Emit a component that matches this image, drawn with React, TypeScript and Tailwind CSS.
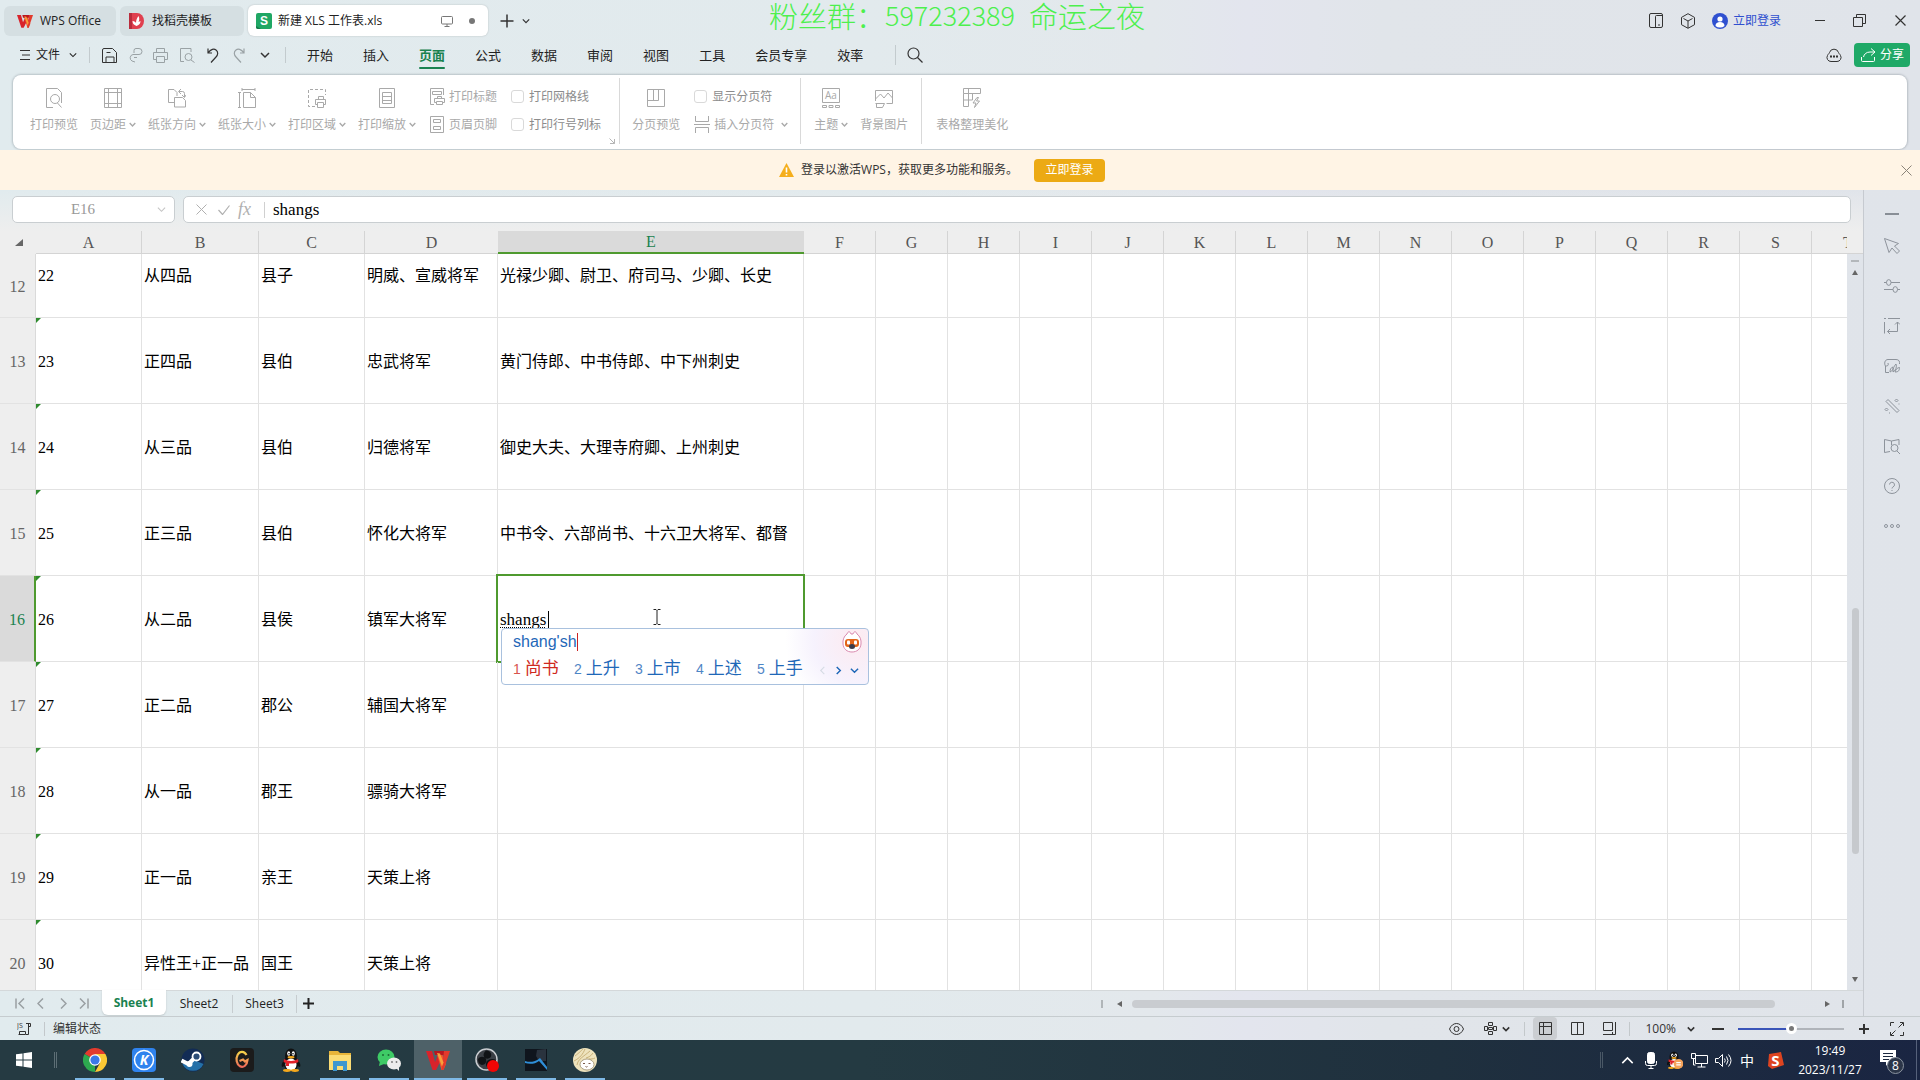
import React from "react";

type SvgProps = { w?: number; h?: number; className?: string; sw?: number; children: React.ReactNode };

function Svg({ w = 18, h = 20, className = "", sw = 1, children }: SvgProps) {
  return (
    <svg
      width={w}
      height={h}
      viewBox={`0 0 ${w} ${h}`}
      fill="none"
      stroke="currentColor"
      strokeWidth={sw}
      className={`shrink-0 ${className}`}
      aria-hidden="true"
    >
      {children}
    </svg>
  );
}

function Chevron({ w = 8, sw = 1.5, className = "" }: { w?: number; sw?: number; className?: string }) {
  return (
    <svg width={w} height={w} viewBox="0 0 10 10" fill="none" stroke="currentColor" strokeWidth={sw} className={`shrink-0 ${className}`} aria-hidden="true">
      <path d="M1 3l4 4 4-4" />
    </svg>
  );
}

function WpsLogo({ size = 16 }: { size?: number }) {
  return (
    <svg width={size} height={size} viewBox="0 0 24 24" className="shrink-0" aria-hidden="true">
      <path d="M0 3h6l3 11 3-7 2.500 6-4.500 9H6.500z" fill="#d8232b" />
      <path d="M10 3h5l5 13-2.500 6h-2z" fill="#f0522c" />
      <path d="M8 3h13l-1.500 4H9z" fill="#b9161f" />
      <path d="M18 3h6l-6.500 19h-2z" fill="#e23a2c" />
      <path d="M11 5l3 .5 3.500 9-1.500 4z" fill="#f8a03a" />
    </svg>
  );
}

/* ---------- title bar ---------- */

function TitleBar() {
  return (
    <header className="relative flex h-10 shrink-0 items-center pl-1 pr-[14px] pt-px text-[12px] text-[#222]">
      <button className="flex h-[30px] w-28 items-center gap-[7px] rounded-md bg-[#d5dfe2] pl-[13px]">
        <WpsLogo />
        <span>WPS Office</span>
      </button>
      <button className="ml-1 flex h-[30px] w-[124px] items-center gap-2 rounded-md bg-[#d5dfe2] pl-2">
        <svg width="16" height="16" viewBox="0 0 16 16" aria-hidden="true">
          <path d="M1 0h8a7 8 0 0 1 0 16H1z" fill="#e0404f" />
          <path d="M1 0h3v16H1z" fill="#b92c3c" />
          <path d="M8.500 13c-3-1-4-3-4-5 2 0 3 1 3.500 2 0-3 1-5 2.500-7 1 2 1 4 0 6l2-1c0 2-1 4-4 5z" fill="#fff" />
        </svg>
        <span>找稻壳模板</span>
      </button>
      <div className="ml-1 flex h-[31px] w-60 items-center rounded-md bg-white pl-2 pr-[13px] shadow-[0_0_2px_rgba(0,0,0,0.2)]">
        <svg width="16" height="16" viewBox="0 0 16 16" aria-hidden="true">
          <rect width="16" height="16" rx="2" fill="#1fa764" />
          <path d="M0 13l5 3H2a2 2 0 0 1-2-2z" fill="#147a48" />
          <text x="8" y="12" textAnchor="middle" fontSize="12" fontWeight="700" fill="#fff" fontFamily="Liberation Sans, sans-serif">S</text>
        </svg>
        <span className="ml-1.5 grow whitespace-nowrap">新建 XLS 工作表.xls</span>
        <Svg w={12} h={12} className="mr-4 text-[#777]">
          <path d="M1.500 1.500h9a1 1 0 0 1 1 1V8a1 1 0 0 1-1 1h-9a1 1 0 0 1-1-1V2.500a1 1 0 0 1 1-1zM6 9v2.500M3.500 11.500h5" />
        </Svg>
        <span className="size-1.5 rounded-full bg-[#777]" />
      </div>
      <button aria-label="新建标签" className="ml-3 text-[#333]">
        <Svg w={14} h={14} sw={1.500}><path d="M7 0.500v13M0.500 7h13" /></Svg>
      </button>
      <button aria-label="标签列表" className="ml-2 text-[#333]"><Chevron /></button>

      <div className="grow" />
      <div className="flex items-center text-[#333]">
        <button aria-label="布局">
          <Svg w={14} h={15}>
            <rect x="0.500" y="0.500" width="13" height="14" rx="1.500" />
            <path d="M6.500 14V3.500a1 1 0 0 1 1-1H13M9 12h2" />
          </Svg>
        </button>
        <button aria-label="应用" className="ml-[17px]">
          <Svg w={16} h={16}>
            <path d="M8 0.700l6.500 3.700v7.300L8 15.300l-6.500-3.600V4.400zM3.500 5.500L8 8l4.500-2.500M8 8v7" />
          </Svg>
        </button>
        <button className="ml-4 flex items-center gap-[5px] text-[#2f4fcf]">
          <svg width="16" height="16" viewBox="0 0 16 16" aria-hidden="true">
            <circle cx="8" cy="8" r="8" fill="#2f50d0" />
            <circle cx="8" cy="6" r="2.600" fill="#fff" />
            <path d="M3.500 13c0-3 2-4 4.500-4s4.500 1 4.500 4A7 7 0 0 1 8 14.500 7 7 0 0 1 3.500 13z" fill="#fff" />
          </svg>
          <span>立即登录</span>
        </button>
        <button aria-label="最小化" className="ml-[34px]"><Svg w={10} h={12}><path d="M0 5.500h10" /></Svg></button>
        <button aria-label="还原" className="ml-7">
          <Svg w={13} h={13}><path d="M0.500 3.500h9v9h-9zM3.500 3.500v-3h9v9h-3" /></Svg>
        </button>
        <button aria-label="关闭" className="ml-[29px]"><Svg w={11} h={11} sw={1.200}><path d="M0.500 0.500l10 10M10.500 0.500l-10 10" /></Svg></button>
      </div>
      <div className="pointer-events-none absolute inset-x-0 top-0 flex justify-center pr-1.5 font-['Noto_Sans_CJK_SC'] text-[29px] font-light leading-[30px] text-[#4df04d]">
        <p className="flex items-center whitespace-nowrap">
          粉丝群：<span className="text-[27px]">597232389</span>
          <span className="ml-3.5">命运之夜</span>
        </p>
      </div>
    </header>
  );
}

/* ---------- menu row ---------- */

const menus = ["开始", "插入", "页面", "公式", "数据", "审阅", "视图", "工具", "会员专享", "效率"];

function MenuBar() {
  return (
    <nav className="flex h-[35px] shrink-0 items-center pb-[5px] pl-5 pr-[10px] text-[12px] text-[#222]">
      <button className="flex items-center">
        <Svg w={10} h={12} className="text-[#333]"><path d="M0 1.500h10M2 6h8M0 10.500h10" /></Svg>
        <span className="ml-1.5">文件</span>
        <Chevron className="ml-[9px]" sw={1.300} />
      </button>
      <span className="ml-3 h-4 w-px bg-[#c3cbce]" />
      <div className="ml-3 flex items-center text-[#9aa2a5]">
        <button aria-label="保存" className="text-[#333]">
          <Svg w={15} h={15}><path d="M0.500 14.500V2a1.500 1.500 0 0 1 1.500-1.500h8.500l4 4V14.500H12M0.500 14.500H4M4 14.500V9h8v5.500zM4.500 4.500h4" /></Svg>
        </button>
        <button aria-label="输出" className="ml-3">
          <Svg w={14} h={15}><path d="M5 5V2.500A2 2 0 0 1 7 .5h3a3 3 0 0 1 0 6H4a3.500 3.500 0 0 0-1 6.500l3 1M5 9.500h3" /></Svg>
        </button>
        <button aria-label="打印" className="ml-2.5">
          <Svg w={15} h={15}><path d="M3.500 4V0.500h8V4M3.500 11.500h-3v-7h14v7h-3M3.500 8.500h8v6h-8z" /></Svg>
        </button>
        <button aria-label="打印预览" className="ml-3">
          <Svg w={15} h={15}><path d="M4 13.500H0.500v-13H11V4M11 12l3.500 2.500" /><circle cx="8.500" cy="9" r="3.500" /></Svg>
        </button>
        <button aria-label="撤销" className="ml-3 text-[#333]">
          <Svg w={12} h={15} sw={1.200}><path d="M1 0.500v4.500h4M1 5C4 1 7 .5 9 2c2.500 2 2 5 0 7l-5 5.500" /></Svg>
        </button>
        <button aria-label="恢复" className="ml-3.5">
          <Svg w={12} h={15} sw={1.200}><path d="M11 0.500v4.500H7M11 5C8 1 5 .5 3 2c-2.500 2-2 5 0 7l5 5.500" /></Svg>
        </button>
        <button aria-label="更多" className="ml-[15px] text-[#333]"><Chevron w={10} /></button>
      </div>
      <span className="ml-[15px] h-4 w-px bg-[#c3cbce]" />
      <ul className="ml-[21px] flex gap-[30px] pt-0.5 text-[13px]">
        {menus.map((m) => (
          <li key={m}>
            {m === "页面" ? (
              <button className="relative block font-bold text-[#1a8250]">
                {m}
                <span className="absolute inset-x-0 -bottom-[3px] h-0.5 rounded bg-[#1a8250]" />
              </button>
            ) : (
              <button className="block">{m}</button>
            )}
          </li>
        ))}
      </ul>
      <span className="ml-8 h-5 w-px bg-[#c3cbce]" />
      <button aria-label="搜索" className="ml-[11px] text-[#333]">
        <Svg w={16} h={16} sw={1.200}><circle cx="6.500" cy="6.500" r="5.500" /><path d="M10.500 10.500l5 5" /></Svg>
      </button>
      <div className="grow" />
      <button aria-label="云状态" className="mr-3 text-[#333]">
        <Svg w={16} h={14}>
          <path d="M5 13.500h6a4 4 0 0 0 3.500-6C14 6 13 6 12.500 4.500a4.700 4.700 0 0 0-9 0C3 6 2 6 1.500 7.500a4 4 0 0 0 3.500 6z" />
          <path d="M4 8.500h2M7 8.500h2M10 8.500h2" strokeWidth="2" />
        </Svg>
      </button>
      <button className="flex h-6 w-14 items-center gap-1 rounded bg-[#1fa967] pl-[7px] text-white">
        <Svg w={15} h={14}><path d="M10 0.500l4 3.500-4 3.500M14 4H9C5 4 3 6.500 2.500 9M0.500 9v3.500a1 1 0 0 0 1 1h11a1 1 0 0 0 1-1V9" /></Svg>
        <span>分享</span>
      </button>
    </nav>
  );
}

/* ---------- ribbon ---------- */

function BigTool({ label, arrow, children }: { label: string; arrow?: boolean; children: React.ReactNode }) {
  return (
    <button className="flex flex-col items-center gap-2 text-[#a9a9a9]">
      <Svg>{children}</Svg>
      <span className="flex items-center whitespace-nowrap leading-[18px]">
        {label}
        {arrow && <Chevron w={7} sw={2} className="ml-[3px]" />}
      </span>
    </button>
  );
}

function Check({ id, label }: { id: string; label: string }) {
  return (
    <label htmlFor={id} className="flex h-[18px] items-center gap-[5px] whitespace-nowrap text-[#8c8c8c]">
      <input id={id} type="checkbox" className="size-[13px] appearance-none rounded-[3px] border border-[#d9d9d9] bg-white" />
      {label}
    </label>
  );
}

function SmallTool({ label, arrow, children }: { label: string; arrow?: boolean; children: React.ReactNode }) {
  return (
    <button className="flex h-[18px] items-center gap-1 whitespace-nowrap text-[#a9a9a9]">
      <Svg w={16} h={17}>{children}</Svg>
      {label}
      {arrow && <Chevron w={7} sw={2} className="ml-[3px]" />}
    </button>
  );
}

const Divider = ({ className = "" }: { className?: string }) => <span className={`h-[66px] w-px bg-[#d9d9d9] ${className}`} />;

function Ribbon() {
  return (
    <section className="mx-[13px] mb-px flex h-[74px] shrink-0 items-center rounded-lg bg-white pb-[3px] pl-[17px] text-[12px] shadow-[0_0_2px_1px_rgba(110,120,130,0.35)]">
      <div className="flex gap-3">
        <BigTool label="打印预览">
          <path d="M8 19.500H1.500v-19h11l4 4V15M12.500 15l4 4.500" /><circle cx="10" cy="11" r="4.500" />
        </BigTool>
        <BigTool label="页边距" arrow>
          <path d="M0.500 0.500h17v19h-17zM4.500 0.500v19M13.500 0.500v19M0.500 4.500h17M0.500 15.500h17" />
        </BigTool>
        <BigTool label="纸张方向" arrow>
          <path d="M6 14.500H0.500v-13H6l3 3V8M6.500 9.500h8l3 3v6.500h-11zM11 3.500h3.500a2 2 0 0 1 2 2V9M13 1l-2.500 2.500L13 6M14 7l2.500 2.500L18 7" />
        </BigTool>
        <BigTool label="纸张大小" arrow>
          <path d="M5.500 4.500h7l5 5v10h-12zM12.500 4.500v5h5M4 1.500h13M4 0v3M17 0v3M1.500 4.500v15M0 4.500h3M0 19.500h3" />
        </BigTool>
        <BigTool label="打印区域" arrow>
          <path d="M7 18.500H0.500v-17h17V7" strokeDasharray="3 2" />
          <path d="M10.500 11.500v-3h5v3M9.500 16.500h-2v-5h10v5h-2M9.500 14.500h6v5h-6z" />
        </BigTool>
        <BigTool label="打印缩放" arrow>
          <path d="M1.500 0.500h15v19h-15zM4.500 4.500h9v11h-9zM4.500 8.500h9M4.500 12.500h9" />
        </BigTool>
      </div>
      <div className="ml-[13px] flex flex-col gap-[10px]">
        <SmallTool label="打印标题">
          <path d="M5 16.500H1.500v-16h13V7M3.500 3.500h9v3h-9zM8.500 11V8.500h4V11M7 14.500H5.500v-4h10v4H14M7.500 13.500h6v3h-6z" />
        </SmallTool>
        <SmallTool label="页眉页脚">
          <path d="M1.500 0.500h13v16h-13zM4.500 3.500h7v3h-7zM4.500 10.500h7v3h-7z" />
        </SmallTool>
      </div>
      <div className="ml-3.5 flex flex-col gap-[10px]">
        <Check id="grid-lines" label="打印网格线" />
        <Check id="row-col-heads" label="打印行号列标" />
      </div>
      <button aria-label="页面设置" className="ml-2 self-end pb-0.5 text-[#b5b5b5]">
        <Svg w={6} h={6}><path d="M0.500 0.500l5 5M5.500 1v4.500H1" /></Svg>
      </button>
      <Divider className="ml-1" />
      <div className="ml-3 flex">
        <BigTool label="分页预览">
          <path d="M0.500 1.500h17v17h-17zM6.500 1.500v11M11.500 1.500v11M0.500 12.500h11" />
        </BigTool>
      </div>
      <div className="ml-3.5 flex flex-col gap-[10px]">
        <Check id="page-breaks" label="显示分页符" />
        <SmallTool label="插入分页符" arrow>
          <path d="M1.500 0v5.500h13V0M1.500 17v-5.500h13V17M0 8.500h16" />
        </SmallTool>
      </div>
      <Divider className="ml-3" />
      <div className="ml-[13px] flex gap-3">
        <BigTool label="主题" arrow>
          <path d="M0.500 0.500h17v14h-17zM0.500 17.500h4v2h-4zM7 17.500h4v2H7zM13.500 17.500h4v2h-4z" />
          <text x="9" y="11" textAnchor="middle" fontSize="10" fill="currentColor" stroke="none">Aa</text>
        </BigTool>
        <BigTool label="背景图片">
          <path d="M0.500 13V2.500h17v13h-6M0.500 11l5-5 3.500 4 4-5 4.500 5M0.500 15.500h9M1.500 15.500v4h6l2-4" />
        </BigTool>
      </div>
      <Divider className="ml-[13px]" />
      <div className="ml-3.5 flex">
        <BigTool label="表格整理美化">
          <path d="M0.500 0.500h17v5h-17zM0.500 5.500v13h5V0.500M0.500 12h9v-6.500M14 9.500l-4 5.500h3l-1.500 4.500 5-6.500h-3l2-3.500z" />
        </BigTool>
      </div>
    </section>
  );
}

function LoginBanner() {
  return (
    <div className="relative flex h-10 shrink-0 items-center justify-center bg-[#fff4e5] pr-9 text-[12px] text-[#333]">
      <svg width="15" height="14" viewBox="0 0 15 14" aria-hidden="true">
        <path d="M7.500 0L15 14H0z" fill="#f5ae1c" />
        <path d="M7.500 4.500v5M7.500 11v1.500" stroke="#fff" strokeWidth="1.600" />
      </svg>
      <span className="ml-[7px]">登录以激活WPS，获取更多功能和服务。</span>
      <button className="ml-4 h-[23px] w-[71px] rounded bg-[#ecaa14] text-white">立即登录</button>
      <button aria-label="关闭提示" className="absolute right-2 top-[15px] text-[#8a8378]">
        <Svg w={11} h={11}><path d="M0.500 0.500l10 10M10.500 0.500l-10 10" /></Svg>
      </button>
    </div>
  );
}

/* ---------- formula bar ---------- */

const serif = "font-['Liberation_Serif','Noto_Sans_CJK_SC',serif]";

function FormulaBar() {
  return (
    <div className="flex h-[41px] shrink-0 items-start gap-2 bg-gradient-to-b from-transparent to-[#eeeeee] pl-3 pr-3 pt-1.5">
      <div className="flex h-[27px] w-[163px] items-center rounded-[5px] border border-[#c9ced1] bg-white pr-2">
        <input aria-label="名称框" defaultValue="E16" className={`w-full min-w-0 bg-transparent pr-1 text-center text-[15px] text-[#999] outline-none ${serif}`} />
        <button aria-label="名称列表" className="text-[#c4c4c4]"><Chevron w={9} sw={1.200} /></button>
      </div>
      <div className="flex h-[27px] grow items-center rounded-[5px] border border-[#c9ced1] bg-white pl-3 text-[#b0b0b0]">
        <button aria-label="取消"><Svg w={11} h={11}><path d="M0.500 0.500l10 10M10.500 0.500l-10 10" /></Svg></button>
        <button aria-label="确认" className="ml-[11px]"><Svg w={12} h={10} sw={1.200}><path d="M0.500 5l4 4.500 7-9" /></Svg></button>
        <button aria-label="插入函数" className="ml-2 w-4 pb-px text-left font-['Liberation_Serif'] text-[18px] italic leading-5">fx</button>
        <span className="ml-2.5 h-4 w-px bg-[#d0d0d0]" />
        <input aria-label="编辑栏" defaultValue="shangs" className={`ml-2 grow bg-transparent text-[17px] leading-5 text-black outline-none ${serif}`} />
      </div>
    </div>
  );
}

/* ---------- input method window ---------- */

const candidates = ["尚书", "上升", "上市", "上述", "上手"];

function ImePopup() {
  return (
    <div className="absolute left-[3px] top-[52px] z-20 h-[57px] w-[368px] rounded border border-[#a9c1de] bg-[radial-gradient(circle_at_97%_20%,#fdeaf0_0,#f6f2fd_12%,#ffffff_20%)] font-['Liberation_Sans','Noto_Sans_CJK_SC',sans-serif]">
      <div className="flex h-[26px] items-center justify-between pl-[11px] pr-1.5">
        <span className="flex items-center text-[16px] leading-5 text-[#1f68b8]">
          shang'sh
          <span className="h-[18px] w-px bg-[#c22]" />
        </span>
        <svg width="20" height="22" viewBox="0 0 20 22" aria-hidden="true">
          <path d="M5 3c1-3 3-3 4 0h2c1-3 3-3 4 0 3 2 4.500 6 4 10-.5 5-4 8-9 8s-8.500-3-9-8C.5 9 2 5 5 3z" fill="#fff" stroke="#d98ab0" />
          <rect x="3" y="8" width="14" height="8" rx="3" fill="#e2651a" />
          <rect x="5" y="9.500" width="3" height="4" rx="1" fill="#fff" />
          <rect x="12" y="9.500" width="3" height="4" rx="1" fill="#fff" />
          <ellipse cx="10" cy="15.500" rx="3" ry="2.500" fill="#3b3b4a" />
        </svg>
      </div>
      <div className="flex h-7 items-center pl-[11px] pr-2">
        <ol className="flex">
          {candidates.map((c, i) => (
            <li key={c} className="w-[61px]">
              <button className={`flex items-center gap-1 whitespace-nowrap text-[17px] leading-5 ${i === 0 ? "text-[#cf2a1e]" : "text-[#1f68b8]"}`}>
                <span className="text-[14px] opacity-80">{i + 1}</span>
                {c}
              </button>
            </li>
          ))}
        </ol>
        <div className="flex items-center gap-[7px] pt-0.5 text-[#1f68b8]">
          <button aria-label="上一页" className="rotate-90 text-[#d5dbe4]"><Chevron w={9} sw={1.200} /></button>
          <button aria-label="下一页" className="-rotate-90"><Chevron w={9} sw={1.600} /></button>
          <button aria-label="展开"><Chevron w={9} sw={1.600} /></button>
        </div>
      </div>
    </div>
  );
}

/* ---------- sheet ---------- */

const columns = "ABCDEFGHIJKLMNOPQRST".split("");
const rows: [number, string[]][] = [
  [12, ["22", "从四品", "县子", "明威、宣威将军", "光禄少卿、尉卫、府司马、少卿、长史"]],
  [13, ["23", "正四品", "县伯", "忠武将军", "黄门侍郎、中书侍郎、中下州刺史"]],
  [14, ["24", "从三品", "县伯", "归德将军", "御史大夫、大理寺府卿、上州刺史"]],
  [15, ["25", "正三品", "县伯", "怀化大将军", "中书令、六部尚书、十六卫大将军、都督"]],
  [16, ["26", "从二品", "县侯", "镇军大将军", ""]],
  [17, ["27", "正二品", "郡公", "辅国大将军", ""]],
  [18, ["28", "从一品", "郡王", "骠骑大将军", ""]],
  [19, ["29", "正一品", "亲王", "天策上将", ""]],
  [20, ["30", "异性王+正一品", "国王", "天策上将", ""]],
];

function ActiveCell() {
  return (
    <>
      <span className="pointer-events-none absolute -inset-0.5 border-2 border-[#4f9a2f]" />
      <span className="flex items-center">
        <input aria-label="E16" defaultValue="shangs" className="h-5 w-12 bg-transparent text-[17px] leading-5 underline decoration-dotted decoration-1 underline-offset-2 outline-none" />
        <span className="h-[18px] w-px bg-black" />
      </span>
      <Svg w={8} h={16} className="absolute left-[155px] top-[33px] text-[#222]"><path d="M0.500 0.500h2.500l1 1 1-1h2.500M4 1.500v13M0.500 15.500h2.500l1-1 1 1h2.500" /></Svg>
      <ImePopup />
    </>
  );
}

function Sheet() {
  return (
    <div className="min-w-0 grow overflow-hidden bg-white">
      <table className={`w-full table-fixed border-separate border-spacing-0 ${serif}`}>
        <colgroup>
          <col className="w-9" />
          <col className="w-[106px]" />
          <col className="w-[117px]" />
          <col className="w-[106px]" />
          <col className="w-[133px]" />
          <col className="w-[306px]" />
          {columns.slice(5, 19).map((c) => <col key={c} className="w-[72px]" />)}
          <col />
        </colgroup>
        <thead>
          <tr className="h-[23px] bg-[#eeeeee] text-[16px] leading-5 text-[#555]">
            <th scope="col" aria-label="全选" className="p-0">
              <svg width="8" height="7" viewBox="0 0 8 7" className="ml-[15px]" aria-hidden="true"><path d="M8 0v7H0z" fill="#666" /></svg>
            </th>
            {columns.map((c) =>
              c === "E" ? (
                <th key={c} scope="col" className="border-b-2 border-[#4f9a2f] bg-[#dadada] p-0 pt-px font-normal text-[#1a8250]">{c}</th>
              ) : (
                <th key={c} scope="col" className={`border-b border-b-[#d4d4d4] border-r-[#d4d4d4] p-0 pt-0.5 font-normal ${c === "D" || c === "T" ? "" : "border-r"}`}>
                  {c === "T" ? <span className="block w-[72px] text-center">T</span> : c}
                </th>
              )
            )}
          </tr>
        </thead>
        <tbody>
          {rows.map(([n, cells]) => (
            <tr key={n} className={n === 12 ? "h-16" : "h-[86px]"}>
              <th
                scope="row"
                className={`p-0 pt-0.5 text-center text-[16px] font-normal ${
                  n === 16 ? "border-r-2 border-r-[#4f9a2f] bg-[#dadada] text-[#1a8250]" : "border-r border-r-[#dadada] bg-[#eeeeee] text-[#666]"
                } border-b border-b-[#e2e2e2]`}
              >
                {n}
              </th>
              {columns.map((c, i) => (
                <td
                  key={c}
                  className={`relative whitespace-nowrap border-b border-[#e2e2e2] px-0.5 text-[16px] leading-5 text-black ${n === 12 ? "pb-5 pt-0" : "pb-0 pt-0.5"} ${c === "T" ? "" : "border-r"}`}
                >
                  {i === 0 && n !== 12 && (
                    <svg width="5" height="5" viewBox="0 0 5 5" className="absolute left-0 top-0" aria-hidden="true"><path d="M0 0h5L0 5z" fill="#2e8b2e" /></svg>
                  )}
                  {n === 16 && c === "E" ? <ActiveCell /> : cells[i]}
                </td>
              ))}
            </tr>
          ))}
        </tbody>
      </table>
    </div>
  );
}

function VerticalScroll() {
  return (
    <div className="flex w-4 shrink-0 flex-col items-center text-[#666]">
      <div className="h-[23px] w-full shrink-0 border-b border-[#d4d4d4] bg-[#eeeeee]" />
      <span className="mt-1.5 h-0.5 w-2 bg-[#b3b7bb]" />
      <svg width="6" height="5" viewBox="0 0 6 5" className="mt-2 shrink-0" aria-hidden="true"><path d="M3 0l3 5H0z" fill="currentColor" /></svg>
      <div className="grow-[333]" />
      <span className="w-[7px] grow-[245] rounded-full bg-[#c6c9cd]" />
      <div className="grow-[123]" />
      <svg width="6" height="5" viewBox="0 0 6 5" className="mb-2 shrink-0" aria-hidden="true"><path d="M3 5l3-5H0z" fill="currentColor" /></svg>
    </div>
  );
}

const sideTools: [string, React.ReactNode][] = [
  ["选择", <path key="a" d="M0.500 0.500l4.500 14 3-4.500 5 5.500 2.500-2.500-5-5 4-2.500z" />],
  ["属性", <path key="b" d="M0 4.500h2.500M7 4.500h9M0 11.500h9M13.500 11.500H16M2.500 4.500a2.200 2.800 0 1 0 4.500 0a2.200 2.800 0 1 0-4.500 0M9 11.500a2.200 2.800 0 1 0 4.500 0a2.200 2.800 0 1 0-4.500 0" />],
  ["样式", <path key="c" d="M0.500 4v11.500M0 0.500h2M4 0.500h12M13.500 4v9.500h-10M11 6.500L13.500 4 16 6.500M6 11l-2.500 2.500L6 16" />],
  ["素材", <path key="d" d="M5 14.500H1.500V8C0 6 .5 1.500 4 1.500h8c3 0 4 2 3.500 4.500M4 5c1 3-1 3-2.500 3M6 14c0-3 1-4 2.500-5 1 2 0 4-2.500 5zM9 14c0-4 1-6 3-8 1 3 0 6-3 8zM11 14c1-3 2-4 4.500-4.500 0 3-1 4.500-4.500 4.500z" />],
  ["美化", <path key="e" d="M2 3.500L4 1.500l11 11-2 2zM12.500 1l1.500 1.500L12.500 4 11 2.500zM2.500 10l1.500 1.500L2.500 13 1 11.500zM15 5.500v1M5.500 14.500v1" />],
  ["查阅", <path key="f" d="M6 13.500L0.500 14.500v-13L7.500 3l7.500-1.500V7M7.500 3v4M7 10a3.500 3.500 0 1 0 7 0a3.500 3.500 0 1 0-7 0M13 13l3 3" />],
  ["帮助", <path key="g" d="M0.500 8a7.500 7.500 0 1 0 15 0a7.500 7.500 0 1 0-15 0M5.500 6.500a2.500 2.500 0 1 1 3.500 2.500q-1 .5-1 1.500M8 12v1" />],
  ["更多", <path key="h" d="M0.500 8a1.500 1.500 0 1 0 3 0a1.500 1.500 0 1 0-3 0M6.500 8a1.500 1.500 0 1 0 3 0a1.500 1.500 0 1 0-3 0M12.500 8a1.500 1.500 0 1 0 3 0a1.500 1.500 0 1 0-3 0" />],
];

function SideBar() {
  return (
    <aside className="flex w-[57px] shrink-0 flex-col items-center border-l border-[#c6cad0] pt-[23px] text-[#8d939b]">
      <button aria-label="收起" className="mb-[23px] h-0.5 w-[14px] bg-[#888e96]" />
      <div className="flex flex-col gap-6">
        {sideTools.map(([name, icon]) => (
          <button key={name} aria-label={name}><Svg w={16} h={16}>{icon}</Svg></button>
        ))}
      </div>
    </aside>
  );
}

function SheetTabs() {
  return (
    <div className="flex h-[26px] shrink-0 items-center border-t border-[#d4d8da] pl-[15px] text-[12px] text-[#222]">
      <div className="flex items-center text-[#9aa0a3]">
        <button aria-label="第一张"><Svg w={10} h={11} sw={1.500}><path d="M1 0.500v10M9 0.500l-5 5 5 5" /></Svg></button>
        <button aria-label="上一张" className="ml-3"><Svg w={7} h={11} sw={1.500}><path d="M6 0.500l-5 5 5 5" /></Svg></button>
        <button aria-label="下一张" className="ml-4"><Svg w={7} h={11} sw={1.500}><path d="M1 0.500l5 5-5 5" /></Svg></button>
        <button aria-label="最后一张" className="ml-3"><Svg w={10} h={11} sw={1.500}><path d="M9 0.500v10M1 0.500l5 5-5 5" /></Svg></button>
      </div>
      <button className="-mt-px ml-[13px] h-[25px] w-16 self-start rounded-b-md bg-white font-bold text-[#1a8250] shadow-[0_1px_2px_rgba(0,0,0,0.15)]">Sheet1</button>
      <button className="w-[66px]">Sheet2</button>
      <span className="h-[18px] w-px bg-[#c6cccf]" />
      <button className="w-[63px]">Sheet3</button>
      <span className="h-[18px] w-px bg-[#c6cccf]" />
      <button aria-label="新建工作表" className="ml-1.5"><Svg w={11} h={11} sw={2}><path d="M5.500 0v11M0 5.500h11" /></Svg></button>
      <div className="grow-[789]" />
      <span className="h-2 w-0.5 bg-[#b0b5b8]" />
      <svg width="5" height="6" viewBox="0 0 5 6" className="ml-3.5 shrink-0" aria-hidden="true"><path d="M5 0v6L0 3z" fill="#666" /></svg>
      <span className="ml-2.5 h-2 grow-[644] rounded-full bg-[#c9ccd0]" />
      <svg width="5" height="6" viewBox="0 0 5 6" className="ml-[50px] shrink-0" aria-hidden="true"><path d="M0 0v6l5-3z" fill="#666" /></svg>
      <span className="ml-3 mr-[19px] h-2 w-0.5 bg-[#a0a4a8]" />
    </div>
  );
}

function StatusBar() {
  return (
    <footer className="flex h-6 shrink-0 items-center border-t border-[#c6cccf] px-4 text-[12px] text-[#333]">
      <button aria-label="宏" className="ml-px">
        <Svg w={14} h={14}>
          <path d="M9 1.500h4.500v3H11M11.500 1.500v11H9M1.500 12.500h7v-3h-6v3" />
          <text x="0" y="6" fontSize="7" fill="currentColor" stroke="none">JS</text>
        </Svg>
      </button>
      <span className="ml-[13px] h-3.5 w-px bg-[#c3c8cb]" />
      <span className="ml-2">编辑状态</span>
      <div className="grow" />
      <button aria-label="护眼模式"><Svg w={15} h={12}><path d="M0.500 6C2 2.500 4.500.5 7.500.5S13 2.500 14.500 6c-1.500 3.500-4 5.500-7 5.500S2 9.500 0.500 6z" /><circle cx="7.500" cy="6" r="2.500" /></Svg></button>
      <button aria-label="阅读模式" className="ml-5 flex items-center gap-[5px]">
        <Svg w={13} h={13}><path d="M4.500 0.500h4v3h-4zM4.500 9.500h4v3h-4zM0.500 4.500h3v4h-3zM9.500 4.500h3v4h-3zM4.500 5.500h4v2h-4z" /></Svg>
        <Chevron w={8} sw={2} />
      </button>
      <span className="ml-[14px] h-3.5 w-px bg-[#c3c8cb]" />
      <button aria-label="普通视图" className="ml-2 grid h-full w-6 place-items-center rounded bg-[#cbced2]"><Svg w={13} h={13}><path d="M0.500 0.500h12v12h-12zM4.500 0.500v12M0.500 4.500h12" /></Svg></button>
      <button aria-label="分页视图" className="ml-3.5"><Svg w={13} h={13}><path d="M0.500 0.500h12v12h-12zM6.500 0.500v12" /></Svg></button>
      <button aria-label="自定义视图" className="ml-[19px]"><Svg w={13} h={13}><path d="M0.500 0.500h9v8h-9zM12.500 0v12.500H0M9.500 12.500v-2.500" /></Svg></button>
      <span className="ml-[13px] h-3.5 w-px bg-[#c3c8cb]" />
      <button className="ml-[15px] flex items-center gap-[11px]">100%<Chevron w={8} sw={2} /></button>
      <button aria-label="缩小" className="ml-[17px] h-0.5 w-3 bg-[#333]" />
      <input
        type="range"
        aria-label="缩放"
        min={0}
        max={100}
        defaultValue={50}
        className="ml-[14px] h-3 w-[106px] appearance-none bg-[linear-gradient(90deg,#3a54b8_50%,#b0b4ba_50%)] bg-[length:100%_2px] bg-center bg-no-repeat [&::-webkit-slider-thumb]:size-[11px] [&::-webkit-slider-thumb]:appearance-none [&::-webkit-slider-thumb]:rounded-full [&::-webkit-slider-thumb]:border-[3px] [&::-webkit-slider-thumb]:border-white [&::-webkit-slider-thumb]:bg-[#777]"
      />
      <button aria-label="放大" className="ml-[15px]"><Svg w={10} h={10} sw={2}><path d="M5 0v10M0 5h10" /></Svg></button>
      <button aria-label="全屏" className="ml-[21px]"><Svg w={14} h={14}><path d="M0.500 4V0.500H4M10 0.500h3.500V4M13.500 10v3.500H10M4 13.500H0.500V10M8.500 5.500l4.500-4.500M5.500 8.500L1 13" /></Svg></button>
    </footer>
  );
}

/* ---------- task bar ---------- */

function Square({ children, bg }: { children: React.ReactNode; bg: string }) {
  return (
    <>
      <rect width="24" height="24" rx="4" fill={bg} />
      {children}
    </>
  );
}

const penguin = (
  <>
    <ellipse cx="12" cy="8" rx="6" ry="7.500" fill="#111" />
    <path d="M6 11c-3 3-4 6-3 8 1 0 2-1 3-2zM18 11c3 3 4 6 3 8-1 0-2-1-3-2z" fill="#111" />
    <ellipse cx="12" cy="15.500" rx="7.500" ry="7.500" fill="#111" />
    <ellipse cx="12" cy="16.500" rx="5.500" ry="6" fill="#fff" />
    <ellipse cx="9.700" cy="5.500" rx="1.500" ry="2.200" fill="#fff" />
    <ellipse cx="14.300" cy="5.500" rx="1.500" ry="2.200" fill="#fff" />
    <circle cx="10" cy="5.800" r="0.800" fill="#111" />
    <circle cx="14" cy="5.800" r="0.800" fill="#111" />
    <ellipse cx="12" cy="9.200" rx="3.500" ry="1.200" fill="#f5a81c" />
    <path d="M5 11c4 2.500 10 2.500 14 0l.5 3c-4 2-11 2-15 0zM7 13h3v5H7z" fill="#e0222a" />
    <ellipse cx="8" cy="22.500" rx="4" ry="1.400" fill="#f5a81c" />
    <ellipse cx="16" cy="22.500" rx="4" ry="1.400" fill="#f5a81c" />
  </>
);

const apps: { name: string; running: boolean; active?: boolean; icon: React.ReactNode }[] = [
  {
    name: "Chrome", running: true,
    icon: (
      <>
        <path d="M12 12L1.600 6A12 12 0 0 1 22.400 6z" fill="#e33b2e" />
        <path d="M12 12v12A12 12 0 0 1 1.600 6z" fill="#2da94f" />
        <path d="M12 6h10.400A12 12 0 0 1 12 24l5-9z" fill="#fcc934" />
        <circle cx="12" cy="12" r="5.800" fill="#fff" />
        <circle cx="12" cy="12" r="4.600" fill="#3b78e7" />
      </>
    ),
  },
  {
    name: "酷狗音乐", running: true,
    icon: (
      <Square bg="#2f83ee">
        <circle cx="12" cy="12" r="9.500" fill="none" stroke="#fff" strokeWidth="1.500" />
        <text x="12" y="17" textAnchor="middle" fontSize="14" fontWeight="700" fontStyle="italic" fill="#fff">K</text>
      </Square>
    ),
  },
  {
    name: "Steam", running: false,
    icon: (
      <>
        <circle cx="12" cy="12" r="11.500" fill="#122c55" />
        <path d="M1.500 16A11.500 11.500 0 0 0 22.500 16L13 12z" fill="#2470a8" />
        <path d="M0.500 12.500l7 3.500 5-5" stroke="#fff" strokeWidth="4" fill="none" />
        <circle cx="8.500" cy="16" r="3" fill="#fff" />
        <circle cx="15.500" cy="8.500" r="4" fill="#2b4d78" stroke="#fff" strokeWidth="1.800" />
      </>
    ),
  },
  {
    name: "Game", running: false,
    icon: (
      <Square bg="#1b1b1b">
        <defs>
          <linearGradient id="game-ring" x1="0" y1="0" x2="0" y2="1"><stop offset="0" stopColor="#f6d34a" /><stop offset="1" stopColor="#f0695a" /></linearGradient>
        </defs>
        <path d="M16.500 7A5.500 7.500 0 1 0 17.500 12L15 13.500l-2-2-3.500 1.500" fill="none" stroke="url(#game-ring)" strokeWidth="2.200" />
      </Square>
    ),
  },
  { name: "QQ", running: false, icon: penguin },
  {
    name: "文件资源管理器", running: true,
    icon: (
      <>
        <path d="M1 3h9l2 2h11v17H1z" fill="#e8b53a" />
        <path d="M1 7h22v15H1z" fill="#fbdc75" />
        <path d="M5 13h14v10h-4v-5H9v5H5z" fill="#3f97cf" />
      </>
    ),
  },
  {
    name: "微信", running: true,
    icon: (
      <>
        <ellipse cx="9" cy="9" rx="8.500" ry="7.500" fill="#3ecb66" />
        <path d="M3 13l-1 5 5-2z" fill="#3ecb66" />
        <ellipse cx="17" cy="15.500" rx="7" ry="6" fill="#ececec" />
        <path d="M19 20l3 3v-4z" fill="#ececec" />
        <circle cx="6" cy="7" r="1" fill="#1d6d35" /><circle cx="11.500" cy="7" r="1" fill="#1d6d35" />
        <circle cx="15" cy="14" r="0.900" fill="#777" /><circle cx="19.500" cy="14" r="0.900" fill="#777" />
      </>
    ),
  },
  { name: "WPS", running: true, active: true, icon: null },
  {
    name: "OBS", running: true,
    icon: (
      <>
        <circle cx="11.500" cy="11.500" r="10.500" fill="#3a3f45" stroke="#c9ccd0" strokeWidth="1.500" />
        <path d="M11 2.500c4 0 6 3 5 6-1 2-4 3-6 1.500-2-2-2-5 1-7.500zM3 11c2-3 6-3 8 0 1 3-1 6-4 6-3-.5-4-3-4-6zM12 13c2-2 6-3 9-1-.5 4-3 8-7 8-3-1-4-4-2-7z" fill="#101316" />
        <circle cx="18" cy="18" r="6" fill="#f20505" />
      </>
    ),
  },
  {
    name: "剪辑", running: true,
    icon: (
      <>
        <rect x="1" y="1" width="22" height="22" fill="#0f151d" />
        <path d="M13 2l9-1v12h-7l-3-5z" fill="#2a333e" />
        <path d="M1 13c5 1.500 9 1 13-1.500l2-1.500 7 9v3l-8-9c-4 3-9 3.500-14 2z" fill="#2f8fd8" />
      </>
    ),
  },
  {
    name: "工具", running: true,
    icon: (
      <>
        <circle cx="12" cy="12" r="12" fill="#eee3bd" />
        <path d="M2 8c5-4 6-5 8-7M1 13c6-3 9-7 11-12M4 17c1-6 6-8 13-14M20 5c-2 3-4 4-7 5M22 10c-2 1-4 1-6 1" stroke="#c9b27a" fill="none" />
        <ellipse cx="14" cy="16.500" rx="7" ry="5.500" fill="#fff" stroke="#8b7b5a" strokeWidth="0.700" />
        <path d="M10 15.500h2M15.500 15.500h2M12.500 18.500q1 1 2 0" stroke="#7a5a4a" fill="none" />
      </>
    ),
  },
];

function Sogou() {
  return (
    <svg width="17" height="17" viewBox="0 0 17 17" aria-hidden="true">
      <path d="M2 2l12-2 3 13-12 4L1 14z" fill="#de4420" />
      <text x="8.500" y="14" textAnchor="middle" fontSize="15" fontWeight="700" fill="#fff">S</text>
    </svg>
  );
}

function TaskBar() {
  return (
    <div className="flex h-10 shrink-0 items-center bg-[linear-gradient(90deg,#253a42_0%,#243a42_45%,#1f303e_75%,#1a2542_100%)] pr-[3px] text-white">
      <button aria-label="开始菜单" className="ml-4">
        <svg width="16" height="16" viewBox="0 0 16 16" fill="#fff" aria-hidden="true">
          <path d="M0 2.300L6.500 1.400v6.100H0zM7.500 1.200L16 0v7.500H7.500zM0 8.500h6.500v6.100L0 13.700zM7.500 8.500H16V16l-8.500-1.200z" />
        </svg>
      </button>
      <span className="ml-[22px] h-4 w-[3px] border-x border-[#5d6e75]" />
      <div className="ml-3.5 flex h-full gap-px">
        {apps.map((a) => (
          <button
            key={a.name}
            aria-label={a.name}
            className={`relative grid w-12 place-items-center ${a.active ? "bg-[#4e6168]" : ""}`}
          >
            {a.active ? <WpsLogo size={24} /> : <svg width="24" height="24" viewBox="0 0 24 24" aria-hidden="true">{a.icon}</svg>}
            {a.running && <span className={`absolute bottom-0 h-0.5 bg-[#7fb9e6] ${a.active ? "inset-x-0" : "inset-x-1"}`} />}
          </button>
        ))}
      </div>
      <div className="grow" />
      <span className="h-4 w-[3px] border-x border-[#4a5866]" />
      <button aria-label="显示隐藏的图标" className="ml-[18px] rotate-180"><Chevron w={13} sw={1.200} /></button>
      <button aria-label="麦克风" className="ml-[11px]">
        <Svg w={12} h={17}><rect x="2.500" y="0.500" width="7" height="11" rx="2" fill="#fff" /><path d="M0.500 9v2.500a2 2 0 0 0 2 2h7a2 2 0 0 0 2-2V9M6 13.500v3M3.500 16.500h5" /></Svg>
      </button>
      <button aria-label="QQ 消息" className="ml-2">
        <svg width="18" height="18" viewBox="0 0 24 24" aria-hidden="true">
          {penguin}
          <circle cx="18" cy="17" r="6.500" fill="#f5a25a" />
          <path d="M15 15.500h6M15 18.500h6" stroke="#fff" strokeWidth="1.500" />
        </svg>
      </button>
      <button aria-label="网络" className="ml-2">
        <Svg w={17} h={15}><path d="M4.500 2.500h12v8h-12zM10.500 10.500v3.500M6.500 14h8M0.500 0.500h4v5h-4zM2.500 5.500V12h2" /></Svg>
      </button>
      <button aria-label="音量" className="ml-[7px]">
        <Svg w={17} h={15}><path d="M0.500 5.500h3l4-4v12l-4-4h-3zM9.500 5.500q1.500 2 0 4M11.500 3.500q3 4 0 8M13.500 1.500q5 6 0 12" /></Svg>
      </button>
      <button className="ml-2 font-['Noto_Sans_CJK_SC'] text-[14px] leading-5">中</button>
      <button aria-label="输入法" className="ml-[13px]"><Sogou /></button>
      <div className="ml-3 w-[68px] text-center text-[12px] leading-[19px]">
        <p>19:49</p>
        <p>2023/11/27</p>
      </div>
      <button aria-label="通知" className="relative ml-3.5 mr-[14px] h-5 w-6">
        <svg width="16" height="16" viewBox="0 0 16 16" className="absolute left-0.5 top-0" aria-hidden="true">
          <path d="M0 0h16v12H9l-3 4v-4H0z" fill="#fff" />
          <path d="M3 3.500h10M3 6.500h10M3 9.500h6" stroke="#1d2a40" />
        </svg>
        <span className="absolute left-[9px] top-[7px] grid size-[17px] place-items-center rounded-full border border-[#8b94a0] bg-[#2b3548] text-[12px] leading-none">8</span>
      </button>
      <span className="h-full w-px bg-[#56617a]" />
    </div>
  );
}

export default function App() {
  return (
    <div className="flex h-screen flex-col overflow-hidden bg-[linear-gradient(90deg,#e1ebee_0%,#e2eaed_45%,#e3e8ec_60%,#e3e5ee_65%,#e1e5ea_72%,#e0e4ea_100%)] font-['Open_Sans','Noto_Sans_CJK_SC',sans-serif]">
      <TitleBar />
      <MenuBar />
      <Ribbon />
      <LoginBanner />
      <div className="flex min-h-0 grow">
        <main className="flex min-w-0 grow flex-col">
          <FormulaBar />
          <div className="flex min-h-0 grow">
            <Sheet />
            <VerticalScroll />
          </div>
          <SheetTabs />
        </main>
        <SideBar />
      </div>
      <StatusBar />
      <TaskBar />
    </div>
  );
}
